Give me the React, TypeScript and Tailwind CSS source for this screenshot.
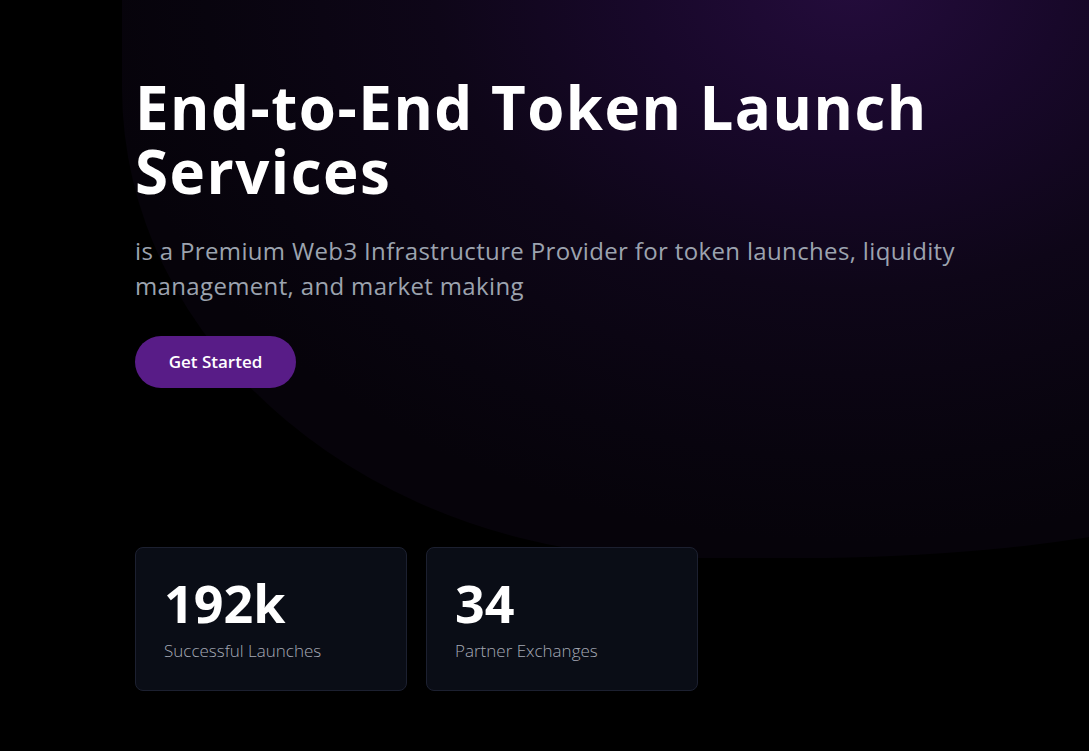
import type { ReactNode } from "react";

// stat shown in the cards under the hero
type Stat = {
  value: string;
  label: string;
};

const stats: Stat[] = [
  { value: "192k", label: "Successful Launches" },
  { value: "34", label: "Partner Exchanges" },
];

function StatCard({ stat }: { stat: Stat }) {
  return (
    <div className="w-[272px] h-[144px] rounded-lg border border-[#1c2030] bg-[#0a0d16] pl-[28px] pt-[23px]">
      <div className="text-[52px] leading-[64px] font-bold text-white">{stat.value}</div>
      <div className="mt-[3px] text-[17px] font-light text-[#a5a9b5]">{stat.label}</div>
    </div>
  );
}

function Glow({ children }: { children?: ReactNode }) {
  return (
    <div className="pointer-events-none absolute left-[122px] top-[-200px] right-[-211px] h-[758px] rounded-bl-[560px_470px] rounded-br-[500px_114px] bg-[radial-gradient(ellipse_760px_560px_at_62%_24%,#240c3c_0%,#18082a_28%,#0e0618_55%,#08040e_85%,#06030a_100%)]">
      {children}
    </div>
  );
}

export default function App() {
  return (
    <div
      className="relative min-h-screen w-full overflow-hidden bg-black"
      style={{ fontFamily: '"Open Sans", "Noto Sans", sans-serif' }}
    >
      <Glow />

      <div className="relative pl-[135px] pr-[40px] pt-[75px]">
        <h1 className="text-[60px] leading-[64px] font-bold tracking-[1.5px] text-white">
          End-to-End Token Launch
          <br />
          Services
        </h1>

        <p className="mt-[30px] max-w-[880px] text-[24px] leading-[35px] tracking-[0.35px] text-[#9ca3af]">
          is a Premium Web3 Infrastructure Provider for token launches, liquidity management, and
          market making
        </p>

        <button className="mt-[33px] flex h-[52px] w-[161px] items-center justify-center rounded-full bg-[#581c87] text-[17px] font-semibold text-white">
          Get Started
        </button>

        <div className="mt-[159px] flex gap-[19px]">
          {stats.map((stat, index) => (
            <StatCard key={index} stat={stat} />
          ))}
        </div>
      </div>
    </div>
  );
}
